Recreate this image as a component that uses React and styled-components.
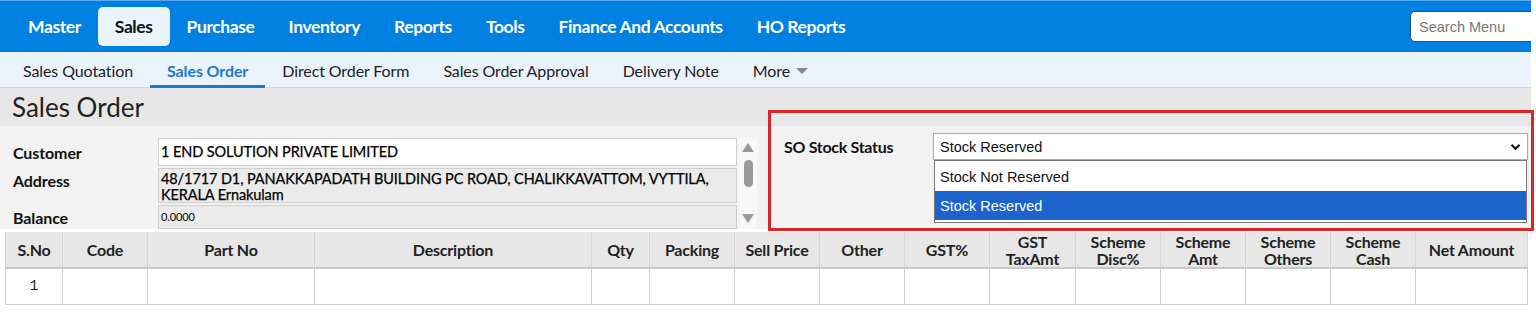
import React from "react";
import styled, { createGlobalStyle } from "styled-components";

const Global = createGlobalStyle`
  html, body { margin: 0; padding: 0; background: #fff; }
  body { font-family: Lato, "Noto Sans", sans-serif; color: #222; }
  * { box-sizing: border-box; }
`;

const Page = styled.div`
  position: relative;
  width: 1531px;
`;

const TopNav = styled.nav`
  height: 52px;
  background: #0080e0;
  border-top: 1px solid #5aaaf0;
  display: flex;
  align-items: flex-start;
  padding: 6px 0 0 11px;
  overflow: hidden;
`;

const NavItem = styled.div`
  height: 39px;
  padding: 0 17px;
  display: flex;
  align-items: center;
  font-size: 17.5px;
  font-weight: 700;
  letter-spacing: -0.4px;
  color: ${(p) => (p.$active ? "#111" : "#fff")};
  background: ${(p) => (p.$active ? "#eaf4fd" : "transparent")};
  border-radius: ${(p) => (p.$active ? "5px" : "0")};
`;

const Search = styled.input`
  margin-left: auto;
  margin-top: 4px;
  margin-right: -12px;
  width: 133px;
  height: 31px;
  border: 1px solid #1d5a7a;
  border-radius: 5px;
  background: #fff;
  padding: 0 8px;
  font-family: "Liberation Sans", Arial, sans-serif;
  font-size: 14.5px;
  outline: none;
  &::placeholder { color: #777; }
`;

const SubNav = styled.nav`
  height: 36px;
  background: #eaf3fc;
  border-bottom: 1px solid #cdd9e4;
  display: flex;
  padding-left: 6px;
`;

const SubItem = styled.div`
  padding: 3px 17px 0;
  display: flex;
  align-items: center;
  font-size: 16px;
  letter-spacing: ${(p) => (p.$active ? "-0.1px" : "-0.1px")};
  color: ${(p) => (p.$active ? "#1f78c4" : "#222")};
  font-weight: ${(p) => (p.$active ? 700 : 400)};
  border-bottom: 3px solid ${(p) => (p.$active ? "#1f78c4" : "transparent")};
  margin-bottom: -1px;
`;

const Caret = styled.span`
  display: inline-block;
  margin-left: 6px;
  margin-top: 2px;
  width: 0;
  height: 0;
  border-left: 6px solid transparent;
  border-right: 6px solid transparent;
  border-top: 6px solid #888;
`;

const Content = styled.div`
  background: #f2f2f2;
`;

const TitleBar = styled.div`
  height: 38px;
  background: #e7e7e7;
  display: flex;
  align-items: center;
  padding-left: 12px;
  font-size: 26px;
  color: #222;
`;

const Body = styled.div`
  display: grid;
  grid-template-columns: 768px 1fr;
  height: 103px;
`;

const FormArea = styled.div`
  display: flex;
  padding: 12px 0 0 0;
`;

const Fields = styled.div`
  display: grid;
  grid-template-columns: 158px 579px;
  row-gap: 2px;
  align-content: start;
`;

const Label = styled.div`
  padding-left: 13px;
  font-size: 16px;
  font-weight: 700;
  letter-spacing: -0.1px;
  display: flex;
  align-items: ${(p) => (p.$top ? "flex-start" : "center")};
  padding-top: ${(p) => (p.$top ? "3px" : "0")};
  color: #111;
`;

const Field = styled.div`
  height: ${(p) => p.$h}px;
  border: 1px solid #cfcfcf;
  background: ${(p) => (p.$white ? "#fff" : "#ebebeb")};
  padding: 2px 2px;
  font-size: ${(p) => (p.$small ? "11px" : "14.5px")};
  line-height: 16px;
  color: #000;
  display: flex;
  align-items: ${(p) => (p.$top ? "flex-start" : "center")};
  letter-spacing: -0.1px;
  -webkit-text-stroke: ${(p) => (p.$small ? "0" : "0.25px")};
`;

const ScrollBar = styled.div`
  width: 18px;
  margin-left: 2px;
  height: 91px;
  background: #f7f7f7;
  display: flex;
  flex-direction: column;
  align-items: center;
  padding: 5px 0 6px;
`;

const Arrow = styled.span`
  flex: none;
  width: 0;
  height: 0;
  border-left: 6px solid transparent;
  border-right: 6px solid transparent;
  ${(p) =>
    p.$down
      ? "border-top: 9px solid #999; margin-top: auto;"
      : "border-bottom: 9px solid #999;"}
`;

const Thumb = styled.span`
  flex: none;
  width: 9px;
  height: 27px;
  border-radius: 5px;
  background: #9a9a9a;
  margin-top: 8px;
`;

const StatusPanel = styled.div`
  position: relative;
  padding: 7px 0 0 16px;
  display: flex;
  align-items: flex-start;
`;

const StatusLabel = styled.div`
  width: 149px;
  font-size: 16px;
  font-weight: 700;
  letter-spacing: -0.3px;
  padding-top: 4px;
  color: #111;
`;

const SelectWrap = styled.div`
  position: relative;
  width: 595px;
`;

const SelectBox = styled.div`
  height: 27px;
  border: 1px solid #aaa;
  background: #fff;
  display: flex;
  align-items: center;
  justify-content: space-between;
  padding: 0 6px;
  font-family: "Liberation Sans", Arial, sans-serif;
  font-size: 14.5px;
  color: #111;
`;

const ListBox = styled.div`
  position: absolute;
  left: 1px;
  top: 27px;
  width: 593px;
  background: #fff;
  border: 1px solid #777;
  padding: 1px 0 2px;
`;

const Option = styled.div`
  height: 29px;
  display: flex;
  align-items: center;
  padding-left: 5px;
  font-family: "Liberation Sans", Arial, sans-serif;
  font-size: 14.5px;
  background: ${(p) => (p.$selected ? "#1c64cc" : "#fff")};
  color: ${(p) => (p.$selected ? "#fff" : "#111")};
`;

const Highlight = styled.div`
  position: absolute;
  left: 768px;
  top: 110px;
  width: 766px;
  height: 121px;
  border: 3px solid #d8262a;
  pointer-events: none;
`;

const Table = styled.table`
  margin: 3px 0 0 5px;
  width: 1522px;
  border-collapse: collapse;
  table-layout: fixed;
`;

const Th = styled.th`
  height: 36px;
  background: #e7e7e7;
  border-left: 1px solid #d6d6d6;
  border-right: 1px solid #d6d6d6;
  border-bottom: 2px solid #c8c8c8;
  font-size: 16px;
  font-weight: 700;
  letter-spacing: -0.2px;
  line-height: 17px;
  color: #222;
  padding: 0;
  text-align: center;
`;

const Td = styled.td`
  height: 36px;
  border: 1px solid #d0d0d0;
  background: #fff;
  text-align: center;
  font-family: "Liberation Mono", monospace;
  font-size: 14px;
  color: #222;
`;

const columns = [
  ["S.No", 57],
  ["Code", 85],
  ["Part No", 167],
  ["Description", 277],
  ["Qty", 58],
  ["Packing", 85],
  ["Sell Price", 85],
  ["Other", 85],
  ["GST%", 85],
  ["GST\nTaxAmt", 86],
  ["Scheme\nDisc%", 85],
  ["Scheme\nAmt", 85],
  ["Scheme\nOthers", 85],
  ["Scheme\nCash", 85],
  ["Net Amount", 112],
];

const menu = ["Master", "Sales", "Purchase", "Inventory", "Reports", "Tools", "Finance And Accounts", "HO Reports"];
const sub = ["Sales Quotation", "Sales Order", "Direct Order Form", "Sales Order Approval", "Delivery Note"];

function Chevron() {
  return (
    <svg width="11" height="8" viewBox="0 0 11 8">
      <path d="M1.5 1.8 L5.5 5.8 L9.5 1.8" fill="none" stroke="#111" strokeWidth="2" />
    </svg>
  );
}

export default function App() {
  return (
    <Page>
      <Global />
      <TopNav>
        {menu.map((m) => (
          <NavItem key={m} $active={m === "Sales"}>{m}</NavItem>
        ))}
        <Search placeholder="Search Menu" />
      </TopNav>
      <SubNav>
        {sub.map((s) => (
          <SubItem key={s} $active={s === "Sales Order"}>{s}</SubItem>
        ))}
        <SubItem>More<Caret /></SubItem>
      </SubNav>
      <Content>
        <TitleBar>Sales Order</TitleBar>
        <Body>
          <FormArea>
            <Fields>
              <Label>Customer</Label>
              <Field $h={28} $white>1 END SOLUTION PRIVATE LIMITED</Field>
              <Label $top>Address</Label>
              <Field $h={35} $top>48/1717 D1, PANAKKAPADATH BUILDING PC ROAD, CHALIKKAVATTOM, VYTTILA, KERALA Ernakulam</Field>
              <Label>Balance</Label>
              <Field $h={24} $small>0.0000</Field>
            </Fields>
            <ScrollBar>
              <Arrow />
              <Thumb />
              <Arrow $down />
            </ScrollBar>
          </FormArea>
          <StatusPanel>
            <StatusLabel>SO Stock Status</StatusLabel>
            <SelectWrap>
              <SelectBox>
                <span>Stock Reserved</span>
                <Chevron />
              </SelectBox>
              <ListBox>
                <Option>Stock Not Reserved</Option>
                <Option $selected>Stock Reserved</Option>
              </ListBox>
            </SelectWrap>
          </StatusPanel>
        </Body>
      </Content>
      <Table>
        <colgroup>
          {columns.map(([n, w]) => (
            <col key={n} style={{ width: w }} />
          ))}
        </colgroup>
        <thead>
          <tr>
            {columns.map(([n]) => (
              <Th key={n}>
                {n.split("\n").map((l, i) => (
                  <div key={i}>{l}</div>
                ))}
              </Th>
            ))}
          </tr>
        </thead>
        <tbody>
          <tr>
            {columns.map(([n], i) => (
              <Td key={n}>{i === 0 ? "1" : ""}</Td>
            ))}
          </tr>
        </tbody>
      </Table>
      <Highlight />
    </Page>
  );
}
